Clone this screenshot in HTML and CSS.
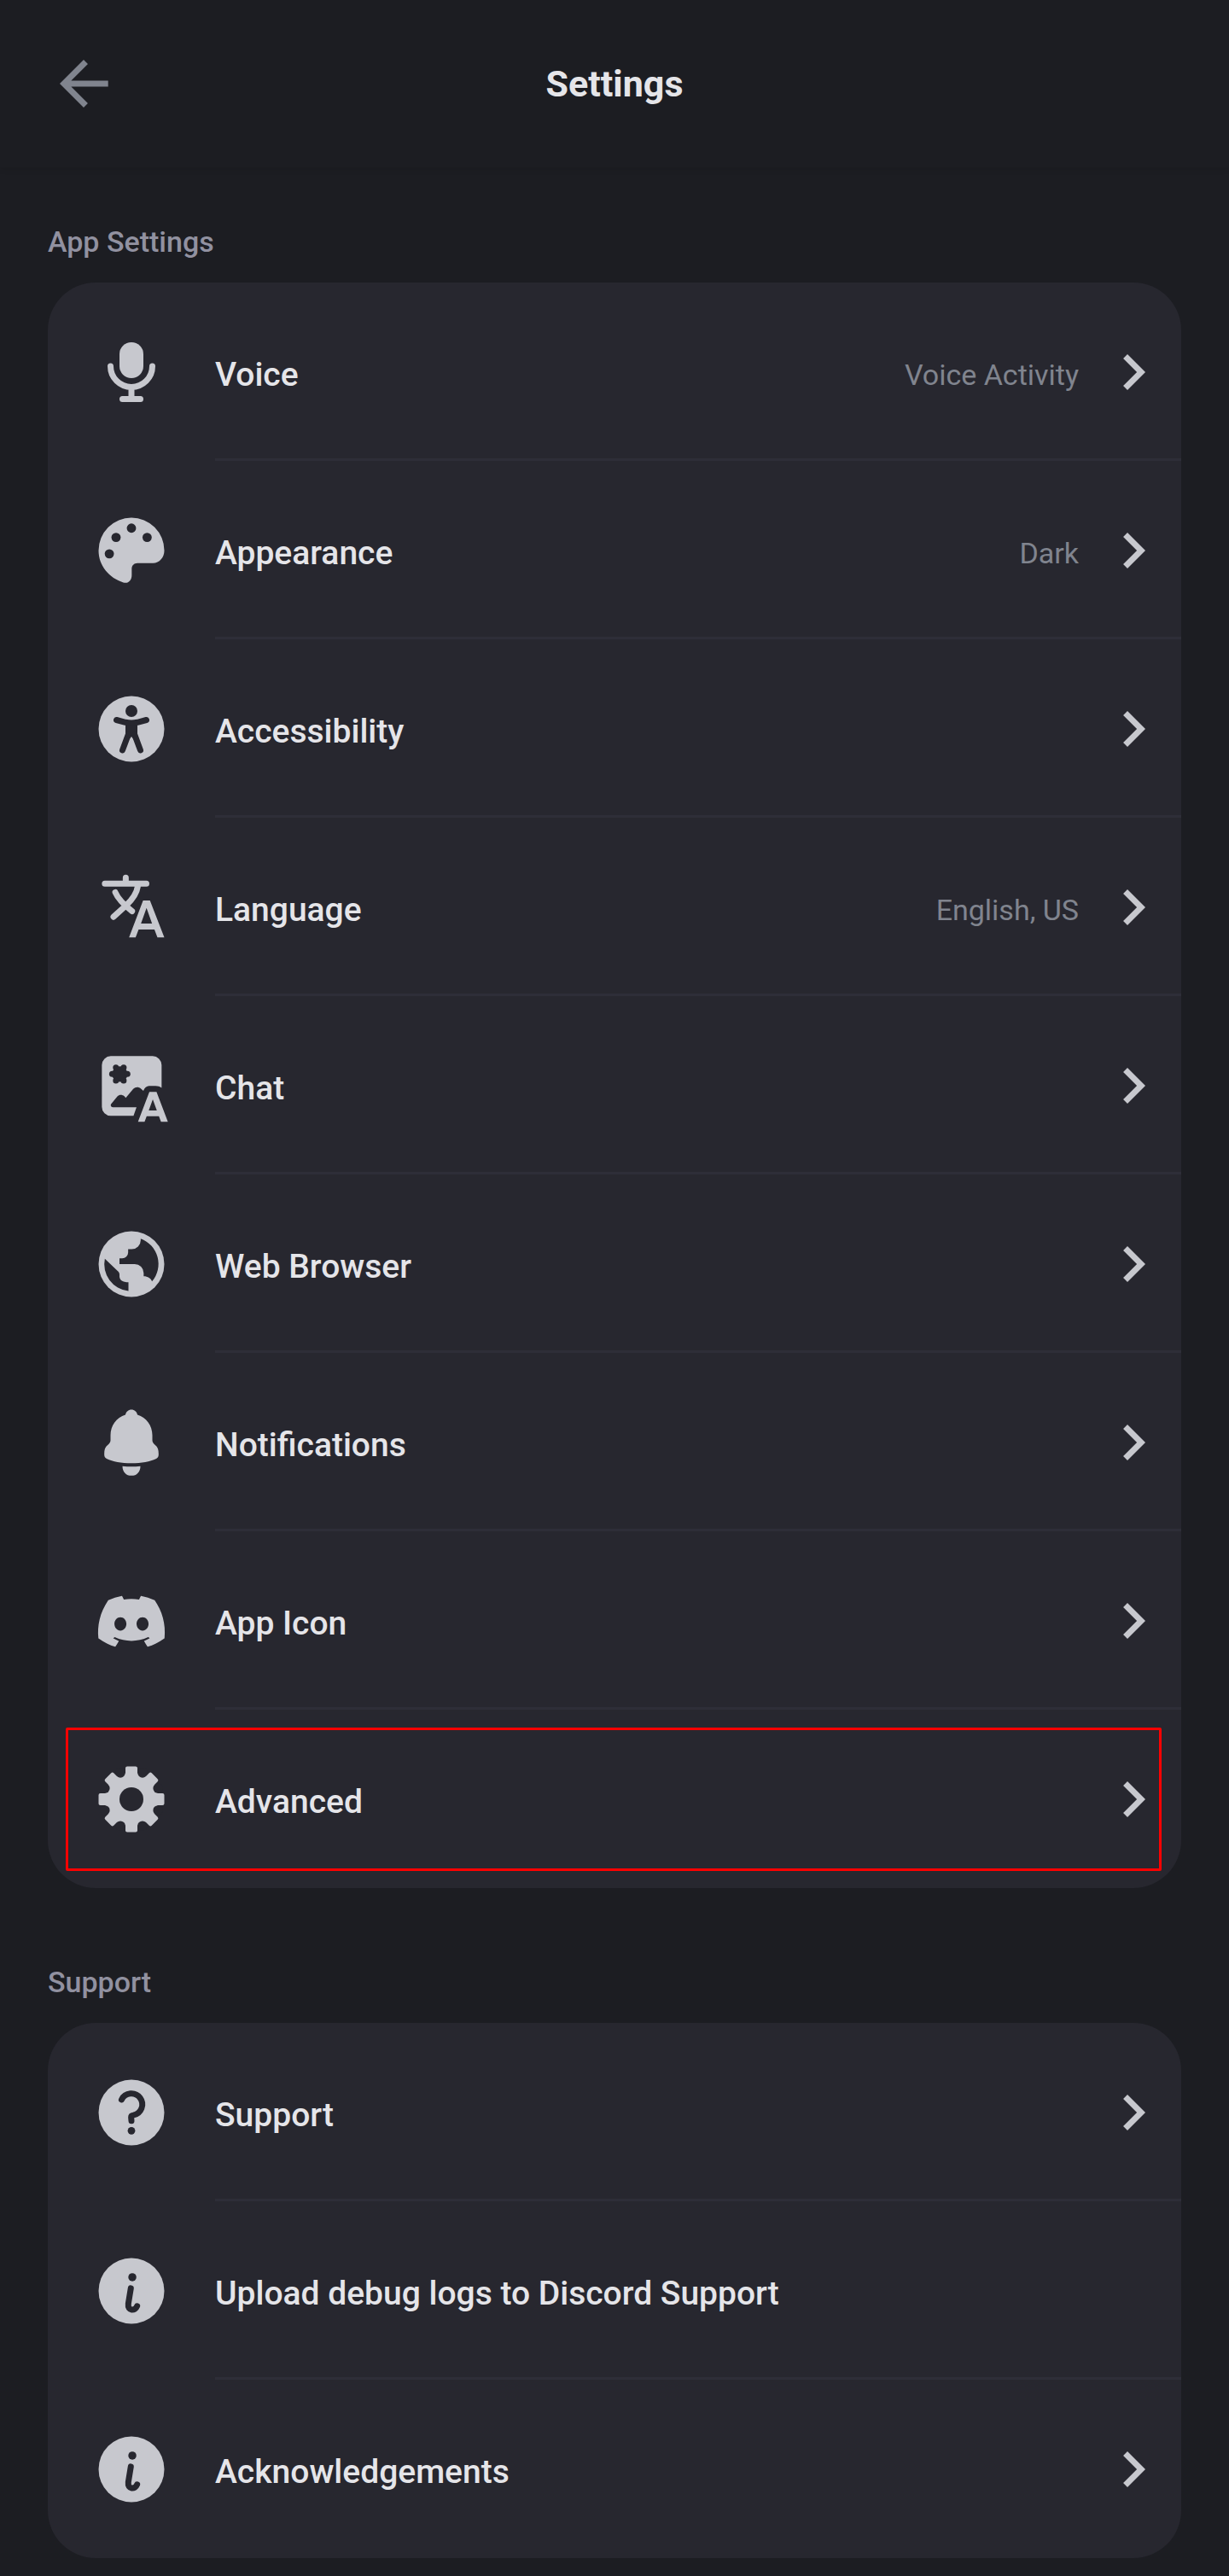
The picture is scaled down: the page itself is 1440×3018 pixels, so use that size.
FILE: index.html
```html
<!DOCTYPE html>
<html lang="en">
<head>
<meta charset="utf-8">
<meta name="viewport" content="width=device-width, initial-scale=1">
<title>Settings</title>
<link rel="stylesheet" href="styles.css">
</head>
<body>
<svg class="sprite" aria-hidden="true">
  <symbol id="chevron" viewBox="0 0 24 24"><path d="M10 6L8.59 7.41 13.17 12l-4.58 4.59L10 18l6-6z"/></symbol>
  <symbol id="info" viewBox="0 0 24 24">
    <circle cx="12" cy="12" r="11"/>
    <circle class="cut" cx="12.3" cy="7.4" r="1.35"/>
    <path class="cut-line" d="M11.8 11.1l-.85 5.2c-.3 2.5 2.3 2.5 2.95.8"/>
  </symbol>
</svg>

<header class="topbar">
  <button class="back" type="button" aria-label="Back">
    <svg class="icon" viewBox="0 0 24 24"><path d="M20.2 11H7.83l5.59-5.59L12 4l-8 8 8 8 1.41-1.41L7.83 13H20.2z"/></svg>
  </button>
  <h1 class="title">Settings</h1>
</header>

<main class="content">
  <section class="group">
    <h2 class="group-title">App Settings</h2>
    <ul class="card">
      <li class="item"><a class="row" href="#voice">
        <svg class="icon" viewBox="0 0 24 24"><rect x="8" y="2" width="8" height="12" rx="4"/><path class="line" d="M5 10a7 7 0 0 0 14 0M12 17v4M9 21h6"/></svg>
        <span class="label">Voice</span><span class="value">Voice Activity</span>
        <svg class="icon"><use href="#chevron"/></svg></a></li>
      <li class="item"><a class="row" href="#appearance">
        <svg class="icon" viewBox="0 0 24 24"><path d="M12 1a11 11 0 0 1 11 11c0 2.3-1.6 4.2-3.8 4.2H14c-1.1 0-1.9.8-1.9 1.9v2.2c0 1.7-1.2 2.9-2.8 2.4C4.600 21.200 1 17.100 1 12A11 11 0 0 1 12 1z"/><g class="cut"><circle cx="12" cy="4.500" r="1.550"/><circle cx="6.850" cy="7.600" r="1.550"/><circle cx="17.250" cy="7.600" r="1.550"/><circle cx="4.600" cy="13.100" r="1.550"/></g></svg>
        <span class="label">Appearance</span><span class="value">Dark</span>
        <svg class="icon"><use href="#chevron"/></svg></a></li>
      <li class="item"><a class="row" href="#accessibility">
        <svg class="icon" viewBox="0 0 24 24"><circle cx="12" cy="12" r="11"/><circle class="cut" cx="12" cy="6" r="2"/><path class="cut" d="M10 9.500h4v4.300l-1 2-1-1.200-1 1.200-1-2z"/><path class="cut-line" d="M7 9l3 .8q2 .4 4 0l3-.8M10.900 14L9 19.100M13.100 14l1.900 5.100"/></svg>
        <span class="label">Accessibility</span>
        <svg class="icon"><use href="#chevron"/></svg></a></li>
      <li class="item"><a class="row" href="#language">
        <svg class="icon" viewBox="0 0 24 24"><path class="line" d="M3.100 4.100H17M10.100 2.100v2M14.100 5.100c-.3 2-1.900 4.400-3.800 6.200L6 15.200M6.600 7c.8 1.900 2.300 3.700 5.600 6.300"/><path fill-rule="evenodd" d="M15.900 9.700h2.300L23 22.100h-2.300l-1-2.700h-5.300l-1 2.700h-2.200zM15.200 17.400h3.700L17.050 12.200z"/></svg>
        <span class="label">Language</span><span class="value">English, US</span>
        <svg class="icon"><use href="#chevron"/></svg></a></li>
      <li class="item"><a class="row" href="#chat">
        <svg class="icon" viewBox="0 0 24 24"><path d="M5.100 2.100h14a3 3 0 0 1 3 3v7.600c-.6-.4-1.200-.6-2-.6h-2.200c-.8 0-1.500.6-1.900 1.600l-.9-.8c-.7-.6-1.800-.6-2.500.2l-2.500 3-.5-.6c-.7-.6-1.700-.6-2.300.1l-2 2.400c-.5.5-.1 1.200.5 1.200h7.900l-1 2.900H5.100a3 3 0 0 1-3-3v-14a3 3 0 0 1 3-3z"/><g class="cut"><circle cx="8.100" cy="8.100" r="2.600"/><circle cx="5.550" cy="8.100" r="1"/><circle cx="10.650" cy="8.100" r="1"/><circle cx="6.800" cy="5.900" r="1"/><circle cx="9.400" cy="5.900" r="1"/><circle cx="6.800" cy="10.300" r="1"/><circle cx="9.400" cy="10.300" r="1"/></g><path fill-rule="evenodd" d="M18 14.100h2.400l3.800 10h-2.300l-.7-1.900h-4.100l-.7 1.900h-2.200zM17.800 20.300h2.700L19.150 16.600z"/></svg>
        <span class="label">Chat</span>
        <svg class="icon"><use href="#chevron"/></svg></a></li>
      <li class="item"><a class="row" href="#browser">
        <svg class="icon" viewBox="0 0 24 24"><circle cx="12" cy="12" r="11"/><path class="cut" d="M15.100 3.500A9 9 0 0 1 18.900 17.800C18.500 16.800 17.500 16.100 16.100 16.100V15a3 3 0 0 0-3-3H8V10.100h.9a2 2 0 0 0 2-2V7h1.200a3 3 0 0 0 3-3zM3.100 10.200l4.500 4.300q.4.400.4.900v.7c0 1.300 1.100 2 3 2v2.900A9 9 0 0 1 3.100 10.200z"/></svg>
        <span class="label">Web Browser</span>
        <svg class="icon"><use href="#chevron"/></svg></a></li>
      <li class="item"><a class="row" href="#notifications">
        <svg class="icon" viewBox="0 0 24 24"><path d="M10 2.700C10.200 1.700 11 1 12 1s1.800.7 2 1.700c3 .9 5 3.600 5 6.900v1.600c0 .5.2.9.5 1.200l.9.900c.4.500 .7 1.200.7 2.600 0 .7-.2 1.200-.8 1.500-2.100 1-4.900 1.500-8.300 1.500s-6.200-.5-8.300-1.500c-.6-.3-.8-.8-.8-1.500 0-1.400.3-2.100.7-2.600l.9-.9c.3-.3.5-.7.5-1.200V9.600c0-3.300 2-6 5-6.900zM9 19.900c2 .2 4 .2 6 0 0 1.900-1.200 3.200-3 3.200s-3-1.300-3-3.200z"/></svg>
        <span class="label">Notifications</span>
        <svg class="icon"><use href="#chevron"/></svg></a></li>
      <li class="item"><a class="row" href="#icon">
        <svg class="icon" viewBox="0 0 24 24"><path transform="translate(.85 1) scale(.93)" d="M20.317 4.3698a19.7913 19.7913 0 00-4.8851-1.5152.0741.0741 0 00-.0785.0371c-.211.3753-.4447.8648-.6083 1.2495-1.8447-.2762-3.68-.2762-5.4868 0-.1636-.3933-.4058-.8742-.6177-1.2495a.077.077 0 00-.0785-.037 19.7363 19.7363 0 00-4.8852 1.515.0699.0699 0 00-.0321.0277C.5334 9.0458-.319 13.5799.0992 18.0578a.0824.0824 0 00.0312.0561c2.0528 1.5076 4.0413 2.4228 5.9929 3.0294a.0777.0777 0 00.0842-.0276c.4616-.6304.8731-1.2952 1.226-1.9942a.076.076 0 00-.0416-.1057c-.6528-.2476-1.2743-.5495-1.8722-.8923a.077.077 0 01-.0076-.1277c.1258-.0943.2517-.1923.3718-.2914a.0743.0743 0 01.0776-.0105c3.9278 1.7933 8.18 1.7933 12.0614 0a.0739.0739 0 01.0785.0095c.1202.099.246.1981.3728.2924a.077.077 0 01-.0066.1276 12.2986 12.2986 0 01-1.873.8914.0766.0766 0 00-.0407.1067c.3604.698.7719 1.3628 1.225 1.9932a.076.076 0 00.0842.0286c1.961-.6067 3.9495-1.5219 6.0023-3.0294a.077.077 0 00.0313-.0552c.5004-5.177-.8382-9.6739-3.5485-13.6604a.061.061 0 00-.0312-.0286zM8.02 15.3312c-1.1825 0-2.1569-1.0857-2.1569-2.419 0-1.3332.9555-2.4189 2.157-2.4189 1.2108 0 2.1757 1.0952 2.1568 2.419 0 1.3332-.9555 2.4189-2.1569 2.4189zm7.9748 0c-1.1825 0-2.1569-1.0857-2.1569-2.419 0-1.3332.9554-2.4189 2.1569-2.4189 1.2108 0 2.1757 1.0952 2.1568 2.419 0 1.3332-.946 2.4189-2.1568 2.4189Z"/></svg>
        <span class="label">App Icon</span>
        <svg class="icon"><use href="#chevron"/></svg></a></li>
      <li class="item highlighted"><a class="row" href="#advanced">
        <svg class="icon" viewBox="0 0 24 24">
          <circle cx="12" cy="12" r="9"/>
          <g class="cut"><circle cx="15.700" cy="3.100" r="1.650"/><circle cx="20.900" cy="8.300" r="1.650"/><circle cx="20.900" cy="15.700" r="1.650"/><circle cx="15.700" cy="20.900" r="1.650"/><circle cx="8.300" cy="20.900" r="1.650"/><circle cx="3.100" cy="15.700" r="1.650"/><circle cx="3.100" cy="8.300" r="1.650"/><circle cx="8.300" cy="3.100" r="1.650"/></g>
          <g><rect x="10" y="1" width="4" height="22" rx=".6"/><rect x="10" y="1" width="4" height="22" rx=".6" transform="rotate(45 12 12)"/><rect x="10" y="1" width="4" height="22" rx=".6" transform="rotate(90 12 12)"/><rect x="10" y="1" width="4" height="22" rx=".6" transform="rotate(135 12 12)"/></g>
          <circle class="cut" cx="12" cy="12" r="4"/>
        </svg>
        <span class="label">Advanced</span>
        <svg class="icon"><use href="#chevron"/></svg></a></li>
    </ul>
  </section>

  <section class="group">
    <h2 class="group-title">Support</h2>
    <ul class="card">
      <li class="item"><a class="row" href="#support">
        <svg class="icon" viewBox="0 0 24 24"><circle cx="12" cy="12" r="11"/><path class="cut-line" d="M8.700 7.700A3.650 3.650 0 1 1 12.600 12.900Q11.900 13 11.900 13.600L12 14.800"/><circle class="cut" cx="12" cy="18.100" r="1.250"/></svg>
        <span class="label">Support</span>
        <svg class="icon"><use href="#chevron"/></svg></a></li>
      <li class="item"><a class="row" href="#logs">
        <svg class="icon"><use href="#info"/></svg>
        <span class="label">Upload debug logs to Discord Support</span></a></li>
      <li class="item"><a class="row" href="#acknowledgements">
        <svg class="icon"><use href="#info"/></svg>
        <span class="label">Acknowledgements</span>
        <svg class="icon"><use href="#chevron"/></svg></a></li>
    </ul>
  </section>
</main>
</body>
</html>
```
FILE: styles.css
```css
:root {
  --page: #1c1d22;
  --card: #27272f;
  --divider: #2e2e38;
  --text: #e5e5e9;
  --icon: #c7c8ce;
  --muted: #80848e;
  --heading: #9191a0;
}

* { box-sizing: border-box; }

body {
  margin: 0;
  background: var(--page);
  color: var(--text);
  font-family: Roboto, "Liberation Sans", sans-serif;
}

.sprite { display: none; }

.topbar {
  display: grid;
  grid-template-columns: 84px 1fr 84px;
  align-items: center;
  padding: 56px;
  box-shadow: 0 1px 8px rgba(0, 0, 0, 0.12);
}

.back {
  display: flex;
  padding: 0;
  border: 0;
  background: none;
  cursor: pointer;
}

.back .icon { fill: var(--muted); }

.title {
  margin: 0;
  font-size: 43px;
  line-height: 52px;
  font-weight: 700;
  text-align: center;
}

.content { padding: 67px 56px 20px; }

.group + .group { margin-top: 90px; }

.group-title {
  margin: 0 0 28px;
  color: var(--heading);
  font-size: 34px;
  line-height: 40px;
  font-weight: 500;
}

.card {
  margin: 0;
  padding: 0;
  list-style: none;
  background: var(--card);
  border-radius: 56px;
}

.item { position: relative; }

.row {
  display: flex;
  align-items: center;
  min-height: 209px;
  padding: 0 14px 0 56px;
  color: inherit;
  text-decoration: none;
}

/* Divider starts under the label, not under the icon */
.item:not(:last-child)::after {
  content: "";
  position: absolute;
  left: 196px;
  right: 0;
  bottom: 0;
  height: 3px;
  background: var(--divider);
}

.highlighted::before {
  content: "";
  position: absolute;
  inset: 21px 23px 20px 21px;
  border: 3px solid #ff0000;
  border-radius: 2px;
  pointer-events: none;
}

.label {
  flex: 1;
  padding: 6px 0 0 56px;
  font-size: 39px;
  line-height: 48px;
  font-weight: 500;
}

.value {
  padding: 6px 22px 0 0;
  color: var(--muted);
  font-size: 34px;
  line-height: 48px;
}

.icon {
  flex: none;
  width: 84px;
  height: 84px;
  fill: var(--icon);
  overflow: visible;
}

.line {
  fill: none;
  stroke: var(--icon);
  stroke-width: 2;
  stroke-linecap: round;
}

.cut { fill: var(--card); }

.cut-line {
  fill: none;
  stroke: var(--card);
  stroke-width: 2;
  stroke-linecap: round;
  stroke-linejoin: round;
}
```
